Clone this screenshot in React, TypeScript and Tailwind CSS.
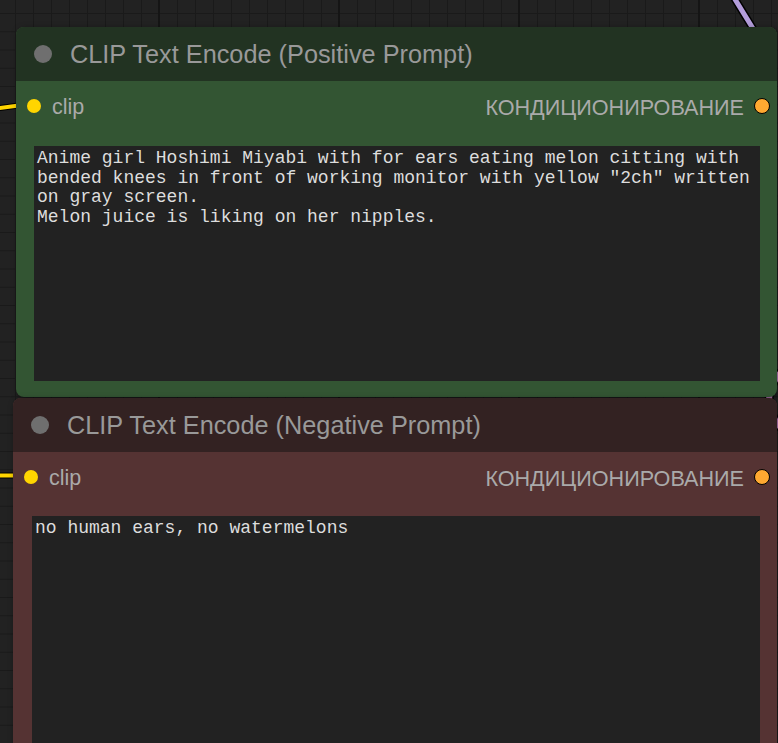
type NodeProps = {
  title: string;
  header: string;
  body: string;
  text: string;
  className: string;
  areaClass: string;
  rowGap: string;
};

function ClipNode({ title, header, body, text, className, areaClass, rowGap }: NodeProps) {
  return (
    <div
      className={`absolute flex flex-col rounded-[8px] overflow-hidden shadow-[2px_2px_6px_rgba(0,0,0,0.5)] ${body} ${className}`}
    >
      {/* header */}
      <div className={`flex items-center h-[54px] shrink-0 pl-[18px] gap-[18px] ${header}`}>
        <span className="w-[18px] h-[18px] rounded-full bg-[#6f6f6f] shrink-0" />
        <span className="text-[25.3px] leading-none pt-[2px] text-[#999] whitespace-nowrap">{title}</span>
      </div>

      {/* slots */}
      <div className="flex items-center justify-between h-[30px] mt-[10px] pl-[11px] pr-[7px] shrink-0">
        <div className="flex items-center gap-[11px]">
          <span className="w-[14px] h-[14px] rounded-full bg-[#ffd500]" />
          <span className="text-[21.5px] leading-none pt-[3px] text-[#aaa]">clip</span>
        </div>
        <div className="flex items-center gap-[10px]">
          <span className="text-[21.6px] leading-none pt-[3px] text-[#aaa]">КОНДИЦИОНИРОВАНИЕ</span>
          <span className="w-[16px] h-[16px] rounded-full bg-[#ffa931] border-[1.5px] border-black" />
        </div>
      </div>

      {/* prompt */}
      <textarea
        readOnly
        value={text}
        spellCheck={false}
        className={`${rowGap} ${areaClass} block resize-none outline-none overflow-hidden bg-[#222] text-[#ddd] font-['Liberation_Mono',monospace] text-[18px] leading-[19.6px] pl-[3px] pr-[3px] pt-[3px]`}
      />
    </div>
  );
}

export default function App() {
  return (
    <div className="relative w-[778px] h-[743px] overflow-hidden bg-[#222] font-['Liberation_Sans',Arial,sans-serif] bg-[linear-gradient(to_right,#151515_2px,transparent_2px),linear-gradient(to_right,#1a1a1a_1px,transparent_1px),linear-gradient(to_bottom,#1a1a1a_1px,transparent_1px)] bg-[size:180px_180px,18px_18px,18px_18.25px] bg-[position:158px_0,15px_0,0_13px]">
      {/* links */}
      <svg className="absolute inset-0" width="778" height="743">
        <g fill="none" strokeLinecap="round">
          <path d="M 733 -4 L 760 40" stroke="#000" strokeWidth="8" />
          <path d="M 733 -4 L 760 40" stroke="#b39ddb" strokeWidth="5" />
          <path d="M 800 355 Q 738 400 800 445" stroke="#000" strokeWidth="9" />
          <path d="M 800 355 Q 738 400 800 445" stroke="#d98fd8" strokeWidth="6" />
          <path d="M -4 108.5 L 30 104" stroke="#000" strokeWidth="6" />
          <path d="M -4 108.5 L 30 104" stroke="#ffd500" strokeWidth="4" />
          <path d="M -4 475.5 L 30 475.5" stroke="#000" strokeWidth="6" />
          <path d="M -4 475.5 L 30 475.5" stroke="#ffd500" strokeWidth="4" />
        </g>
      </svg>

      <ClipNode
        title="CLIP Text Encode (Positive Prompt)"
        header="bg-[#223322]"
        body="bg-[#335533]"
        className="left-[16px] top-[27px] w-[761px] h-[370px]"
        areaClass="mx-[17px] ml-[18px] h-[235px]"
        rowGap="mt-[25px]"
        text={'Anime girl Hoshimi Miyabi with for ears eating melon citting with bended knees in front of working monitor with yellow "2ch" written on gray screen.\nMelon juice is liking on her nipples.'}
      />

      <ClipNode
        title="CLIP Text Encode (Negative Prompt)"
        header="bg-[#332222]"
        body="bg-[#553333]"
        className="left-[13px] top-[398px] w-[764px] h-[370px] rounded-b-none"
        areaClass="mr-[17px] ml-[19px] h-[260px]"
        rowGap="mt-[24px]"
        text="no human ears, no watermelons"
      />
    </div>
  );
}
